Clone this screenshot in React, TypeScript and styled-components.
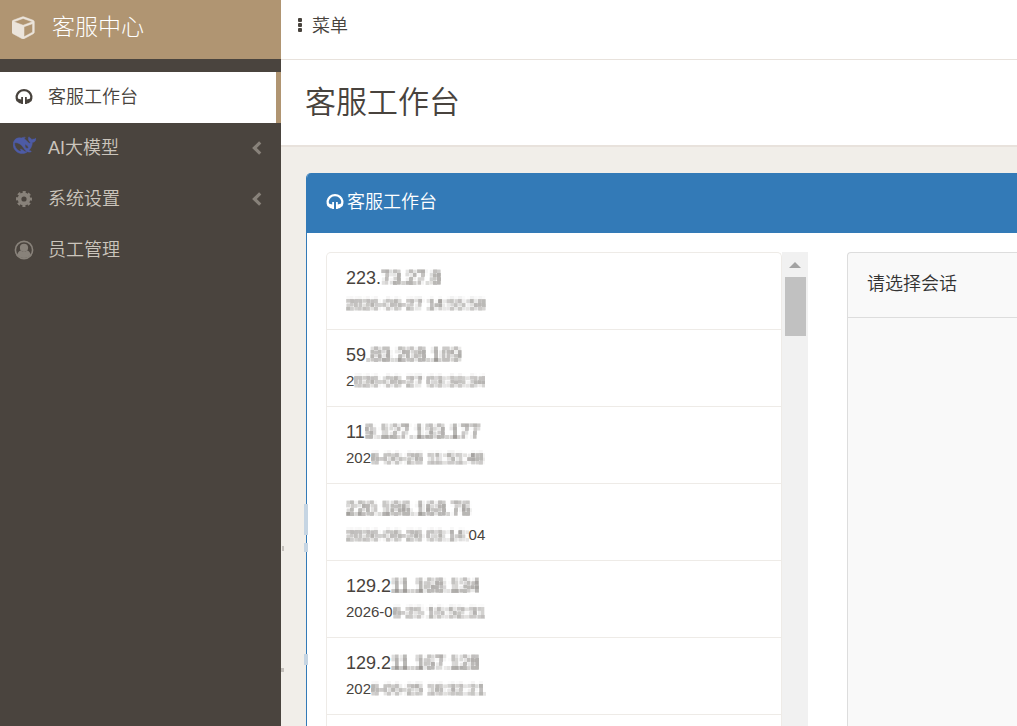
import React from "react";
import styled, { createGlobalStyle, css } from "styled-components";

const Global = createGlobalStyle`
  *, *::before, *::after { box-sizing: border-box; }
  html, body, #root { height: 100%; }
  body {
    margin: 0;
    overflow: hidden;
    background: #f1eee9;
    color: #48433d;
    font: 350 18px/26px "Liberation Sans", "Noto Sans CJK SC", sans-serif;
  }
`;

const Shell = styled.div`
  display: grid;
  grid-template-columns: 281px minmax(0, 1fr);
  min-height: 100%;
`;

const Sidebar = styled.aside`
  background: #4a443e;
`;

const Brand = styled.a`
  display: flex;
  align-items: center;
  gap: 16px;
  height: 59px;
  padding: 0 12px 6px;
  background: #b09572;
  color: #fff;
  font-size: 23px;
  font-weight: 300;
  text-decoration: none;
  svg { width: 24px; height: 24px; opacity: 0.75; }
`;

const Menu = styled.ul`
  list-style: none;
  margin: 0;
  padding: 13px 0 0;
`;

const MenuLink = styled.a<{ $active?: boolean }>`
  display: flex;
  align-items: center;
  height: 51px;
  padding: 0 19px 2px 0;
  color: #cbc5bc;
  text-decoration: none;
  ${(p) =>
    p.$active &&
    css`
      background: #fff;
      color: #48433d;
      border-right: 5px solid #b09572;
    `}
`;

const MenuIcon = styled.span<{ $color: string }>`
  display: flex;
  justify-content: center;
  flex: 0 0 48px;
  color: ${(p) => p.$color};
`;

const MenuText = styled.span`
  flex: 1;
`;

const Arrow = styled.svg`
  width: 10px;
  height: 14px;
  color: #88827a;
`;

const Main = styled.main`
  display: flex;
  flex-direction: column;
  min-width: 0;
  height: 100vh;
`;

const TopBar = styled.header`
  height: 60px;
  padding: 13px 16px;
  background: #fff;
  border-bottom: 1px solid #e8e2dc;
`;

const MenuButton = styled.button`
  display: flex;
  align-items: center;
  gap: 9px;
  padding: 0;
  border: 0;
  background: none;
  color: inherit;
  font: inherit;
`;

const PageHead = styled.div`
  padding: 21px 24px 20px;
  background: #fff;
  border-bottom: 2px solid #e8e2dc;
`;

const PageTitle = styled.h1`
  margin: 0;
  font-size: 31px;
  font-weight: 350;
  line-height: 44px;
`;

const Content = styled.div`
  position: relative;
  flex: 1;
  min-height: 0;
  padding: 26px 0 0 25px;
`;

const Panel = styled.section`
  display: flex;
  flex-direction: column;
  height: 100%;
  border-left: 1px solid #337ab7;
  border-top-left-radius: 5px;
  background: #fff;
  overflow: hidden;
`;

const PanelHead = styled.h2`
  display: flex;
  align-items: center;
  gap: 3px;
  flex: none;
  height: 60px;
  margin: 0;
  padding: 0 19px 2px;
  background: #337ab7;
  color: #fff;
  font-size: 18px;
  font-weight: 350;
`;

const PanelBody = styled.div`
  display: grid;
  grid-template-columns: minmax(0, 482px) minmax(170px, 1fr);
  gap: 39px;
  flex: 1;
  min-height: 0;
  padding: 19px 0 0 19px;
`;

const Conversations = styled.div`
  display: flex;
  min-height: 0;
`;

const List = styled.ul`
  flex: 1;
  min-width: 0;
  margin: 0;
  padding: 0;
  list-style: none;
  overflow: hidden;
  border: 1px solid #eeebe7;
  border-bottom: 0;
  border-radius: 5px 5px 0 0;
`;

const Item = styled.li`
  height: 77px;
  padding: 12px 19px;
  border-bottom: 1px solid #eeebe7;
`;

const Line = styled.div<{ $small?: boolean }>`
  height: 26px;
  font-size: ${(p) => (p.$small ? 15 : 18)}px;
  white-space: pre;
`;

const Masked = styled.span`
  display: inline-block;
  filter: url(#mosaic);
  opacity: 0.8;
`;

const ScrollTrack = styled.div`
  display: flex;
  flex-direction: column;
  align-items: center;
  flex: 0 0 26px;
  background: #f1f1f1;
`;

const ScrollUp = styled.button`
  width: 26px;
  height: 25px;
  padding: 0;
  border: 0;
  background: none;
  line-height: 0;
`;

const Thumb = styled.div`
  width: 21px;
  height: 59px;
  background: #c1c1c1;
`;

const Chat = styled.section`
  border: 1px solid #ddd;
  border-width: 1px 0 0 1px;
  border-top-left-radius: 4px;
  background: #f9f9f9;
`;

const ChatHead = styled.h3`
  margin: 0;
  padding: 18px 19px 20px;
  border-bottom: 1px solid #ddd;
  color: #333;
  font-size: 18px;
  font-weight: 350;
`;

/* Stray strokes of the mosaic brush, lying over the panel's left edge. */
const Smudge = styled.i<{ $x: number; $y: number; $w: number; $h: number; $color: string }>`
  position: absolute;
  left: ${(p) => p.$x}px;
  top: ${(p) => p.$y}px;
  width: ${(p) => p.$w}px;
  height: ${(p) => p.$h}px;
  background: ${(p) => p.$color};
`;

const Cube = () => (
  <svg viewBox="0 0 1792 1792" fill="currentColor" aria-hidden="true">
    <path d="M896 1629l640-349v-636l-640 233v752zm-64-865l698-254-698-254-698 254zm832-252v768q0 35-18 65t-49 47l-704 384q-28 16-61 16t-61-16l-704-384q-31-17-49-47t-18-65v-768q0-40 23-73t61-47l704-256q22-8 44-8t44 8l704 256q38 14 61 47t23 73z" stroke="currentColor" strokeWidth="40" />
  </svg>
);

const Headphones = () => (
  <svg width="18" height="18" viewBox="0 0 18 18" fill="none" aria-hidden="true">
    <path d="M2.900 13A7.400 7 0 1 1 15.100 13" stroke="currentColor" strokeWidth="2.300" />
    <path d="M8 9v7H6.200v-.6C3.800 15.200 1.900 13.800 1 11.400l2.400-.6 2.800.6V9zM10 9v7h1.800v-.6c2.400-.2 4.300-1.600 5.200-4l-2.400-.6-2.800.6V9z" fill="currentColor" />
  </svg>
);

const Whale = () => (
  <svg width="23" height="24" viewBox="0 0 24 24" fill="currentColor" aria-hidden="true">
    <path d="M23.750 1.660c-.25-.12-.36.11-.51.23-.05.04-.09.090-.140.140-.370.390-.800.650-1.360.620-.830-.050-1.530.210-2.150.840-.130-.780-.570-1.240-1.230-1.540-.350-.150-.700-.310-.950-.640-.170-.240-.220-.510-.300-.770-.060-.160-.110-.330-.300-.350-.200-.030-.280.140-.360.280-.310.580-.440 1.210-.420 1.860.030 1.450.640 2.610 1.860 3.430.140.090.170.190.130.330-.080.280-.180.560-.270.840-.050.180-.140.220-.330.140a5.500 5.500 0 0 1-1.740-1.180c-.860-.830-1.630-1.740-2.600-2.460a11 11 0 0 0-.690-.470c-.990-.960.130-1.750.390-1.840.270-.100.090-.430-.780-.430s-1.670.300-2.690.690c-.150.060-.310.100-.470.140a9.600 9.600 0 0 0-2.880-.100C4.080 1.630 2.590 2.520 1.490 4.030.180 5.840-.130 7.890.250 10.030c.4 2.250 1.560 4.120 3.350 5.590 1.850 1.530 3.980 2.280 6.410 2.140 1.480-.090 3.120-.290 4.970-1.850.470.230.960.320 1.770.390.630.060 1.230-.030 1.700-.130.730-.150.680-.830.410-.950-2.140-1-1.670-.590-2.100-.920 1.090-1.290 2.730-2.620 3.370-6.950.050-.340.010-.560 0-.840 0-.170.030-.230.230-.250.530-.060 1.050-.210 1.530-.470 1.380-.750 1.940-2 2.070-3.490.020-.230 0-.460-.240-.580zM11.580 15.170c-2.080-1.640-3.090-2.170-3.510-2.150-.390.020-.320.470-.230.760.090.290.210.480.370.740.110.170.190.420-.110.610-.670.410-1.840-.140-1.890-.170-1.360-.800-2.490-1.860-3.290-3.300-.770-1.390-1.220-2.880-1.290-4.470-.020-.380.090-.520.470-.590.500-.090 1.020-.110 1.520-.040 2.120.310 3.920 1.260 5.430 2.750.860.850 1.510 1.870 2.190 2.870.710 1.060 1.480 2.070 2.460 2.900.350.290.620.510.890.670-.800.090-2.130.110-3.010-.580zm1-6.420c0-.17.140-.31.310-.31.17 0 .860.370 1.900 1.070.450.560.8.87 1.120 1.640.230.540.050 1.040-.430 1.130-.700.140-1.430.080-2.070-.610-.53-.570-.830-1.670-.83-2.920z" stroke="currentColor" strokeWidth="0.500" />
  </svg>
);

const Cog = () => (
  <svg width="16" height="16" viewBox="0 0 16 16" fill="none" aria-hidden="true">
    <circle cx="8" cy="8" r="4.500" stroke="currentColor" strokeWidth="3.800" />
    <circle cx="8" cy="8" r="6.600" stroke="currentColor" strokeWidth="2.800" strokeDasharray="2.900 2.284" strokeDashoffset="1.450" />
  </svg>
);

const User = () => (
  <svg width="20" height="20" viewBox="0 0 20 20" aria-hidden="true">
    <circle cx="10" cy="10" r="8.600" fill="none" stroke="currentColor" strokeWidth="1.600" />
    <circle cx="10" cy="7.800" r="4.100" fill="currentColor" />
    <path d="M3.300 15c.5-2.700 1.600-4.200 3.600-4.600 1.600 1.700 4.600 1.700 6.200 0 2 .4 3.100 1.900 3.600 4.600-3.300 3.900-10.100 3.900-13.400 0z" fill="currentColor" />
  </svg>
);

const Chevron = () => (
  <Arrow viewBox="0 0 10 14" fill="none" aria-hidden="true">
    <path d="M8.200 1.300L2.400 7l5.800 5.700" stroke="currentColor" strokeWidth="3.200" />
  </Arrow>
);

const Dots = () => (
  <svg width="6" height="16" viewBox="0 0 6 16" fill="currentColor" aria-hidden="true">
    <rect x="1" y="0" width="4" height="4" rx="1" />
    <rect x="1" y="5" width="4" height="4" rx="1" />
    <rect x="1" y="10" width="4" height="4" rx="1" />
  </svg>
);

const MosaicFilter = () => (
  <svg width="0" height="0" style={{ position: "absolute" }} aria-hidden="true">
    <filter id="mosaic" x="0" y="0" width="100%" height="100%" colorInterpolationFilters="sRGB">
      <feGaussianBlur in="SourceGraphic" stdDeviation="1" result="soft" />
      <feFlood x="1" y="1" width="2" height="2" floodColor="#000" result="dot" />
      <feOffset in="dot" x="0" y="0" width="4" height="4" result="cell" />
      <feTile in="cell" result="grid" />
      <feComposite in="soft" in2="grid" operator="in" />
      <feMorphology operator="dilate" radius="1" />
    </filter>
  </svg>
);

type Entry = { ip: [string, string]; time: [string, string, string?] };

const entries: Entry[] = [
  { ip: ["223.", "73.27.8"], time: ["", "2026-06-27 14:55:58"] },
  { ip: ["59", ".83.208.109"], time: ["2", "026-06-27 03:38:34"] },
  { ip: ["11", "9.127.133.177"], time: ["202", "6-06-26 11:51:48"] },
  { ip: ["", "220.186.168.76"], time: ["", "2026-06-26 03:14:", "04"] },
  { ip: ["129.2", "11.168.134"], time: ["2026-0", "6-25 16:52:31"] },
  { ip: ["129.2", "11.167.128"], time: ["202", "6-06-25 16:32:21"] },
  { ip: ["", ""], time: ["", ""] },
];

const menu = [
  { text: "客服工作台", icon: <Headphones />, color: "#48433d", active: true },
  { text: "AI大模型", icon: <Whale />, color: "#4d5ba5", expandable: true },
  { text: "系统设置", icon: <Cog />, color: "#88827a", expandable: true },
  { text: "员工管理", icon: <User />, color: "#88827a" },
];

export default function App() {
  return (
    <>
      <Global />
      <MosaicFilter />
      <Shell>
        <Sidebar>
          <Brand href="#">
            <Cube />
            客服中心
          </Brand>
          <nav>
            <Menu>
              {menu.map((m) => (
                <li key={m.text}>
                  <MenuLink href="#" $active={m.active}>
                    <MenuIcon $color={m.color}>{m.icon}</MenuIcon>
                    <MenuText>{m.text}</MenuText>
                    {m.expandable && <Chevron />}
                  </MenuLink>
                </li>
              ))}
            </Menu>
          </nav>
        </Sidebar>
        <Main>
          <TopBar>
            <MenuButton type="button">
              <Dots />
              菜单
            </MenuButton>
          </TopBar>
          <PageHead>
            <PageTitle>客服工作台</PageTitle>
          </PageHead>
          <Content>
            <Panel>
              <PanelHead>
                <Headphones />
                客服工作台
              </PanelHead>
              <PanelBody>
                <Conversations>
                  <List>
                    {entries.map((e, i) => (
                      <Item key={i}>
                        <Line>
                          {e.ip[0]}
                          <Masked>{e.ip[1]}</Masked>
                        </Line>
                        <Line $small>
                          {e.time[0]}
                          <Masked>{e.time[1]}</Masked>
                          {e.time[2]}
                        </Line>
                      </Item>
                    ))}
                  </List>
                  <ScrollTrack>
                    <ScrollUp type="button" aria-label="向上滚动">
                      <svg width="12" height="6" viewBox="0 0 12 6" aria-hidden="true">
                        <path d="M0 6l6-6 6 6z" fill="#a3a3a3" />
                      </svg>
                    </ScrollUp>
                    <Thumb />
                  </ScrollTrack>
                </Conversations>
                <Chat>
                  <ChatHead>请选择会话</ChatHead>
                </Chat>
              </PanelBody>
            </Panel>
            <Smudge $x={23} $y={357} $w={4} $h={31} $color="#c6d5e3" />
            <Smudge $x={23} $y={396} $w={4} $h={9} $color="#c6d5e3" />
            <Smudge $x={23} $y={507} $w={4} $h={11} $color="#c6d5e3" />
            <Smudge $x={1} $y={399} $w={2} $h={5} $color="#c4c0bb" />
            <Smudge $x={0} $y={521} $w={3} $h={4} $color="#c4c0bb" />
          </Content>
        </Main>
      </Shell>
    </>
  );
}
